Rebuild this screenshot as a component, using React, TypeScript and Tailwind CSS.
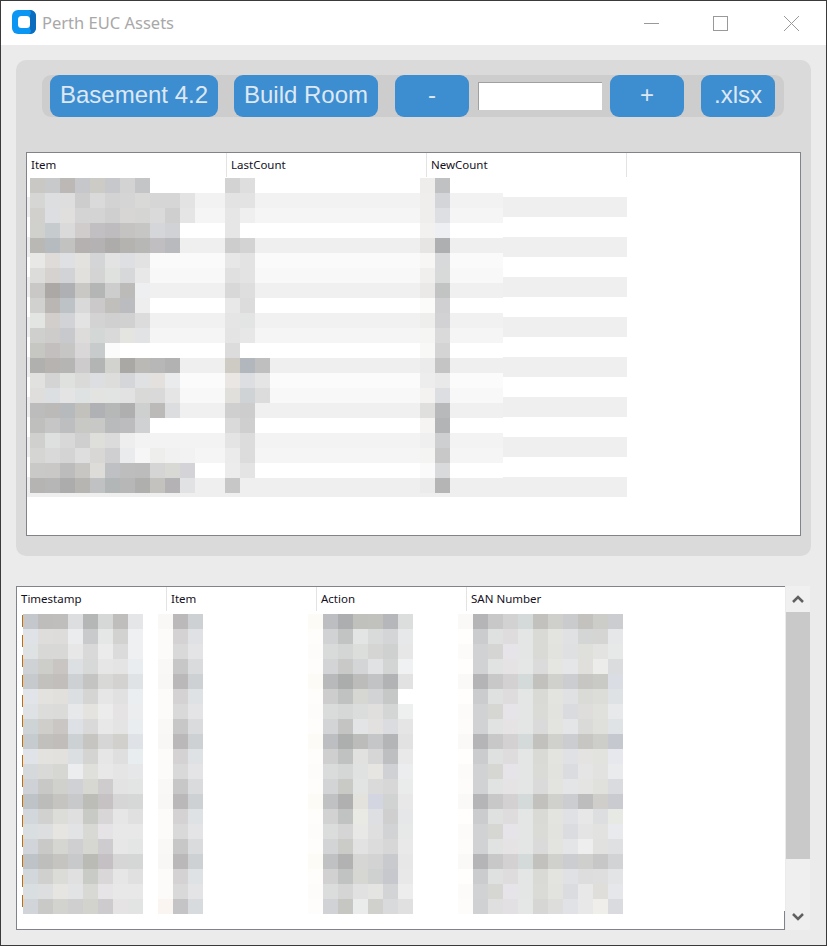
import React from "react";

// rows of the blurred top table: [row background, item cells, lastCount cells, newCount cells]
const assetRows: [string, string, string, string][] = [
  ["#ffffff", "c9c8c5 c7c9cb bcb8b5 c5c7ca cdcbc5 c6c8cb d4d3d4 c4c5c7", "d3d3d3 dedede", "eeedec c0c1c3"],
  ["#f2f2f2", "d6d6d5 dcdee0 dedede cdcdcd dadada d3d3d3 d5d5d5 d9d9d7 d6d6d6 d6d6d6 e3e3e3", "e3e3e3 e3e3e3", "efeeed d3d5d8"],
  ["#f5f5f5", "d1d0cd dcdee1 e0dfdd d4d4d4 d5d4d4 cfcfcf d7d6d5 d5d5d4 dadada cfcfcf e5e5e5", "e6e6e6 efefef", "efeeed dddfe2"],
  ["#ffffff", "d0d0cc c6cbce dadada d0cccb c1bfc2 bebcbe c4c3c1 c6c6c5 d5d6d9 d0d2d5", "e6e6e6", "f2f1f0 eeeff2"],
  ["#efefef", "b9b8b4 b6bbbf c2c2c0 b5b1b0 b4b2b3 aeacab b5b3b0 b7b7b5 c0bec1 b9babd", "cdcdcd d3d3d3", "e6e5e3 aeafb1"],
  ["#fafafa", "e8e9e7 dfdbd9 dee0e3 e4e2df d3d5d7 e2e3e2 dddfe2 e2e2e2", "e7e7e7 e3e3e3", "f7f6f4 d8d9db"],
  ["#f8f8f8", "dcdddb d5d2cf d1d3d6 e2e0dd d4d4d4 dfe1df d6d8da e8e8e9", "e0e0e0 e3e3e3", "f0efed d8dad9"],
  ["#f0f0f0", "c9c8c6 aca8a6 aeb0b4 c9c8c5 b4b6b5 cdcdcd bdbbb9 eeeff1", "d8d8d8 dedede", "eae9e7 c2c4c3"],
  ["#ffffff", "d1d1cf bab6b3 bcc2c6 d9d9da cbc9c9 c0bfbc babcbf eeeeee", "e8e8e8 dcdcdc", "fbfbf9 d0d0d2"],
  ["#f1f1f1", "e3e5e3 d1cecc d1d3d6 e3e3e3 d3d3d3 d0d0d0 d1d1d1 dcdcdc", "e4e5e4 e2e5e4", "eeeeed d2d2d4"],
  ["#f5f5f5", "cfcfcd cdccca c8c9cc dddcda d3d7d6 d9d9d9 e4e4e1 e2e3e5", "e4e4e4 e7e7e7", "f5f5f4 dadada"],
  ["#ffffff", "c6c6c3 c3bfbe c6c6c5 d9d7d8 c8cbcb fbfbfb", "dcdcdc", "f8f8f7 d4d4d5"],
  ["#efefef", "b0b1ae b7b3b0 b5b5b3 cdcbcb b2b5b3 d2d2ce a9a8a5 bab9b6 b7b7b7 b2b2b3", "cdcbc4 b2b7bd bfbfbf", "ebebeb c4c4c5"],
  ["#fbfbfb", "e1e2df d4d4d4 dfe1df dadad8 dcdee1 dddddb d4d6d9 e0e1e2 e3e0de eaebec", "e9e6e3 dcdee2 e5e5e5", "ededed e9e9e9"],
  ["#f8f8f8", "dfdedc dcdfe1 e3e4e3 dfe2e3 e3e3e1 e2e4e3 e1e2e1 d9d9d7 d9d9d9 e5e5e5", "e0dfdc d0d3d6 dcdcdc", "f3f2f0 dcdee1"],
  ["#f0f0f0", "bcbcbc bbbab9 b7babc c2c1bc afb1b4 b6b7b7 aeafae cecfcf bbbab8 dcdddf", "cfcfcf cdcdcd", "dfdfdd b7b9bb"],
  ["#ffffff", "bfbfbd c5c6c5 bdbec0 c8c8c5 c8c9c6 b9babc bcbcbf d0d1d3", "dadada cfcfcf", "f5f4f2 b2b4b6"],
  ["#f3f3f3", "d0d0ce dde0df d8d8d8 cfcfcf dededb dbdbdc eeeeef", "e4e4e4 dcdcdc", "efefef cdcfd1"],
  ["#f5f5f5", "d5d5d4 d9d9d9 d4d4d4 dedede d8d7d6 cfcfd2 e9ebed f6f6f6 eeeeec f1f1f1 f2f2f2", "ebebeb dcdcdc", "f4f4f2 c8c8c8"],
  ["#ffffff", "c9c9c7 c9c8c7 bcbcbc c7c6c3 dddcd9 bfc0c4 bdbdbd bcbcbc d5d5d5 d8d8d5 d4d4d8", "ececec e4e4e4", "fafafa d9dadc"],
  ["#efefef", "b5b4b2 b6b6b6 adacac b6b5b2 bfc1c3 b2b6b7 b7b7b7 afafae c3c2be b4b2b4 e1e2e4", "c7c7c7", "ebebeb b5b5b6"],
];

// rows of the blurred log table: [timestamp, item, action, SAN number]
const logRows: [string, string, string, string][] = [
  ["c4c8cc bfbdbb c0bebc dcdee0 b5b6b6 d5d8d6 bfbebc e5e6e8", "faf8f6 bbb9b9 ced1d4", "fdfbf6 bdbec1 adaeaf c0c0bd c1c1be b6b7ba dcdedd", "fbf9f7 b5b5b7 c8c8c8 d3d2d2 d4d9da c2c1be cfcfcc c9cbcc c3c2bf ccccc9 cbcdd0"],
  ["dfe2e6 dedddb dddcda ebecee c8cacb e5e7e6 d2d2d1 eff0f2", "fdfbf9 d4d2d2 dfe1e4", "fefdfb d1d2d3 c1c4c3 e3e5e4 d9dbda d4d5d6 e7e8ea", "fffefc cbcccd dfe1e0 dfdcdd e4e6e5 d9d9d6 e3e3e0 dfe1e3 d4d5d5 d5d6d4 e5e7e9"],
  ["dfe2e3 d8d8d6 d8d8d6 e7e7e7 d9d9d9 ebebeb dcdbdb eef0f2", "fcfbfa d9d9d9 e4e4e6", "fdfcfa d9dbdb d4d5d5 dcdedc d5d6d3 ced1d0 e7e7e8", "fcfbfa d1d2d4 d5d6d4 e6e4e8 e4e6e5 d9d9d6 e2e2df dee0e2 dfdfdc e3e3e2 e7e9e8"],
  ["ced2d5 cdcdc9 c8c5c3 dde0e2 d7d8d8 e6e6e6 e5e4e4 e9edf0", "faf8f6 c7c7c7 dadbdd", "fefdfb d2d4d6 c9c9c7 d4d5d6 e1e2e4 d3d4d4 f0f1f3", "fffefc d1d2d4 e1e3e2 e5e3e4 e5e7e6 dadbda e5e5e2 e4e6e8 e1dfdc ecedea dbdcde"],
  ["c6cacd c3c1be c1bebc cdd1d4 c4c4c2 d8d8d7 d3d2d0 e0e3e6", "f9f7f5 bab8b8 ced1d4", "fdfbf6 b8b9bb abacac bcbdba c2c3c5 b2b3b5 e2e2e2", "fbf9f7 b4b4b6 c8c8c8 d3d1d1 d4d9da c2c1be d0d0cc cbcdd0 c8c6c3 c9c9c6 dadde3"],
  ["e1e4e9 e3e2df e1e0dd dcdfe1 d5d6d3 e6e6e6 e2e1e1 eaeef1", "fdfbf9 d4d2d2 dfe2e5", "fefdfb cdcdcd bfc2c1 d6d6d3 d2d3d5 c6c7c7 ffffff", "fffefc cbcccd dfe1e0 dfdcdd e4e6e5 d9d9d6 e3e3e0 dfe1e3 dadad7 dcdcd9 dee2e5"],
  ["dfe2e4 dcdcda dbdbd9 e7e8ea e4e3df ececec e5e3e3 ebedef", "fcfbfa d9d9d9 e4e4e6", "fdfcfa dadcdc d6d7d7 dbdddc e0dfdd d3d6d5 eef0f0", "fcfbfa d1d2d4 d6d6d3 e6e4e8 e4e6e5 dadad7 e2e2df d9dbde dedddb e0e0dd e7e9eb"],
  ["ced3d6 cfcecb c9c6c3 dde0e4 d8d9d8 e8e8e8 e5e4e4 e9edf0", "faf8f6 c7c7c7 dadbdd", "fefdfb d2d4d6 c4c4c2 e3e4e5 e2e1df dadcdf e5e5e5", "fdfcfa d1d2d4 e1e3e2 e5e3e4 e4e6e6 dadada e3e3e0 e3e5e7 dadad8 dfdfdc dfe3e6"],
  ["c6cbcf c2c0bd c0bdba ccd1d4 c6c5c2 d6d6d6 d1d0cd dfe3e7", "f9f7f5 bab8b8 ced1d4", "fdfbf6 bdbec1 adaeae bcbdba c5c6c8 b4b5b7 e2e2e2", "fbf9f7 b5b5b7 c8c8c8 d3d1d1 d4d9da c2c1be d0d0cc cbcdd0 c8c6c3 cdcdc9 c5c8ce"],
  ["e0e4e9 e3e2df e2e1de dcdfe1 d4d5d2 e6e6e6 e0dfdf e8edf0", "fdfbf9 d4d2d2 dfe2e5", "fefdfb cfcfcf bfc2c1 e1e2df d6d6d6 bdbfc1 e9e9ea", "fffefc cbcccd dfe1e0 dfdcdd e4e6e5 d9d9d6 e3e3e0 dfe1e5 e4e3e1 e2e2df e7e8ed"],
  ["d6d9db d9d9d7 d6d6d3 ebedef dfdfdc e8e8e8 e5e5e5 e5e7e9", "fcfbfa d9d9d9 e4e4e6", "fdfcfa dadcdb d5d6d6 e0e2e1 e6e5e2 cfd1d4 ecedef", "fcfbfa d1d2d4 d6d6d3 e6e4e8 e4e6e5 dadad7 e2e2df dadcdf e5e5e5 e2e2e0 e9ebed"],
  ["ced1d5 c8c8c6 d0d0cc d0d1d4 d7d8d2 cfcccd e3e3e3 e2e5e3", "faf8f6 c7c7c7 dadbdd", "fefdfb d3d4d6 c9c9c6 e2e3e3 dadadb d7d7d8 eaeceb", "fdfcfa d1d2d4 e1e3e2 e5e3e4 e4e6e6 dadada e3e3e0 e3e5e7 e4e5e3 e0e0dc dadbdf"],
  ["bdc3c7 bcbcba c5c4c0 c8c9cb bbbdb6 c6c2c4 d5d6d5 d5d8d7", "f9f7f5 bab8b8 ced1d4", "fdfbf6 c0c1c3 b0b0b0 e3e2dd d3d6e0 d1d2d2 e8e8e8", "fbf9f7 b5b5b7 c8c8c8 d3d1d1 d4d9da c2c1be d0d0cc cbcdd0 bdbdbd cfcecb c9cbd0"],
  ["d1d7da d1d1cf dcdcd8 dfdfdf c8cac5 d9d6d8 e6e6e6 dfe0df", "fdfbf9 d4d2d2 dfe2e5", "fefdfb d2d2d2 c0c3c1 eaeae5 dedfe3 cfcfd0 e6e7e8", "fffefc cbcccd dfe1e0 dfdcdd e4e6e5 d9d9d6 e3e3e0 dfe1e5 e7e7e7 dcdee0 e7e9e5"],
  ["d9dfe1 dcdee0 e6e5e2 e2e3e5 d8d9d4 e5e3e6 e8e8e8 e8e8e8", "fcfbfa d9d9d9 e4e4e6", "fdfcfa dbdddc d5d5d5 e8e9e6 dfdfdf d1d3d5 e7e8e8", "fcfbfa d1d2d4 d6d6d3 e6e4e8 e4e6e5 dadad7 e2e2df dadcdf e4e4e4 e2e2e0 e8eaed"],
  ["d1d5d9 c9c9c7 d5d5d1 cfcfd1 d6d7d1 cfcccf e7e7e7 e3e6e4", "faf8f6 c7c7c7 dadbdd", "fefdfb d3d4d6 cbcbc8 e2e2e2 dcdcdd d7d7d8 e8e9e8", "fdfcfa d1d2d4 e1e3e2 e5e3e4 e4e6e6 dadada e3e3e0 e3e5e7 eeeeee e1e1df dee0e2"],
  ["bdc3c7 bebebc c5c4c0 c8c9cb b9bbb4 c5c0c3 d5d6d5 d4d7d6", "f9f7f5 bab8b8 ced1d4", "fdfbf6 c0c1c3 b2b2b2 d6d6d4 d3d3d3 c9cacd e7e7e7", "fbf9f7 b5b5b7 c8c8c8 d3d1d1 d4d9da c2c1be d0d0cc cbcdd0 cfcfcd c7c7c7 d1d3d5"],
  ["d1d7da d0d0ce dbdbd7 e0e0e0 c9cbc6 dad7d9 e6e6e6 dfe0df", "fdfbf9 d4d2d2 dfe2e5", "fefdfb d1d1d1 c0c3c1 d6d6d3 cfd0d0 c6c8cd e8e8e9", "fffefc cbcccd dfe1e0 dfdcdd e4e6e5 d9d9d6 e3e3e0 dfe1e5 dddddd dedede e2e4e6"],
  ["d9dfe1 dcdee0 e6e5e2 e2e3e5 d8d9d4 e6e4e7 e8e8e8 e8e8e8", "fcfbfa d9d9d9 e4e4e6", "fdfcfa dbdddc d5d5d5 e1e1e1 e4e4e2 d3d4d6 ecedec", "fcfbfa d1d2d4 d6d6d3 e6e4e8 e4e6e5 dadad7 e2e2df dadcdf e8e8e8 dfdeda e5e7ea"],
  ["d1d4d8 c9c9c7 d2d2ce cfcfcf d2d3cc cecbce e5e3e3 e1e4e2", "fbf5f1 c4c4c7 d7dbde", "fefdfb d0d2d6 c6c6c3 e9ecea d0d0cd d9dadc e0e0e0", "fdfcfa d0d1d3 dfdfdf e2e0e2 e5e7e6 d6d6d4 dddddb e0e2e5 e8e8e8 efeeeb d9dbdf"],
];

const Cells = ({ colors }: { colors: string }) => (
  <>
    {colors.split(" ").map((c, i) => (
      <div key={i} className="w-[15px] h-[15px] shrink-0" style={{ backgroundColor: `#${c}` }} />
    ))}
  </>
);

const Zebra = ({ className }: { className: string }) => (
  <div className={`${className} shrink-0`}>
    {Array.from({ length: 16 }).map((_, i) => (
      <div key={i} className={`h-5 ${i % 2 === 1 ? "bg-[#efefef]" : "bg-white"}`} />
    ))}
  </div>
);

const ToolButton = ({ label, className }: { label: string; className: string }) => (
  <button className={`${className} h-[42px] pb-0.5 shrink-0 rounded-[9px] bg-[#3d8dd1] text-[24px] leading-none text-[#dde8f3] flex items-center justify-center`}>
    {label}
  </button>
);

const HeaderCell = ({ label, noDivider }: { label: string; noDivider?: boolean }) => (
  <div
    className={`${noDivider ? "" : "border-r border-[#e3e3e3]"} w-full h-6 pl-1 text-[11.5px] leading-[24px] text-[#14101c]`}
  >
    {label}
  </div>
);

const App: React.FC = () => {
  return (
    <div className="w-[827px] h-[946px] border border-[#3a3a3a] bg-[#ebebeb] flex flex-col overflow-hidden font-['Noto_Sans',sans-serif]">
      {/* title bar */}
      <div className="h-11 bg-white flex items-center shrink-0">
        <svg className="ml-[11px] -mt-[2px]" width="24" height="24" viewBox="0 0 24 24">
          <rect width="24" height="24" rx="6" fill="#0a96f2" />
          <path d="M18 0 h0 a6 6 0 0 1 6 6 v12 a6 6 0 0 1 -6 6 h-1 a3 3 0 0 0 1 -5 v-14 a3 3 0 0 0 -1 -5 z" fill="#0c6cbd" />
          <rect x="6" y="6" width="12" height="12" rx="3.5" fill="#ffffff" />
        </svg>
        <span className="ml-[6px] text-[16.5px] leading-none text-[#a8a8a8]">Perth EUC Assets</span>
        <div className="ml-auto flex items-center mt-px">
          <div className="w-[15px] h-px bg-[#999999]" />
          <div className="ml-[54px] w-[15px] h-[15px] border border-[#999999]" />
          <svg className="ml-[56px] mr-[27px]" width="15" height="15" viewBox="0 0 15 15">
            <path d="M0 0 L15 15 M15 0 L0 15" stroke="#999999" strokeWidth="1" fill="none" />
          </svg>
        </div>
      </div>

      <div className="flex-1 pl-[15px] pt-[15px] flex flex-col">
        {/* counting panel */}
        <div className="w-[795px] h-[496px] rounded-[10px] bg-[#dadada] pt-[15px] pl-[10px] shrink-0">
          <div className="ml-4 w-[742px] h-[42px] rounded-[9px] bg-[#cdcdcd] pl-2 flex items-center font-['Liberation_Sans',sans-serif]">
            <ToolButton label="Basement 4.2" className="w-[168px]" />
            <ToolButton label="Build Room" className="ml-4 w-[144px]" />
            <ToolButton label="-" className="ml-[17px] w-[74px]" />
            <input
              readOnly
              className="ml-[9px] w-[124px] h-7 shrink-0 bg-white border-t border-l border-[#a0a0a0] outline-none"
            />
            <ToolButton label="+" className="ml-2 w-[74px]" />
            <ToolButton label=".xlsx" className="ml-[17px] w-[74px]" />
          </div>

          <div className="mt-[35px] w-[775px] h-[384px] border border-[#82828a] bg-white">
            <div className="grid grid-cols-[200px_200px_200px]">
              <HeaderCell label="Item" />
              <HeaderCell label="LastCount" />
              <HeaderCell label="NewCount" />
            </div>
            <div className="flex">
              <Zebra className="w-[3px]" />
              <div className="w-[473px] pt-px shrink-0">
                {assetRows.map(([bg, item, last, count], i) => (
                  <div key={i} className="flex h-[15px]" style={{ backgroundColor: bg }}>
                    <div className="flex w-[195px] shrink-0"><Cells colors={item} /></div>
                    <div className="flex w-[195px] shrink-0"><Cells colors={last} /></div>
                    <div className="flex w-[83px] shrink-0"><Cells colors={count} /></div>
                  </div>
                ))}
                <div className="h-1 bg-[#efefef]" />
              </div>
              <Zebra className="w-[124px]" />
            </div>
          </div>
        </div>

        {/* log table and its scrollbar */}
        <div className="mt-[30px] h-[344px] flex shrink-0">
          <div className="w-[769px] h-[344px] border-l border-t border-b border-[#82828a] bg-white flex shrink-0">
            <div className="flex-1">
              <div className="grid grid-cols-[150px_150px_150px_150px]">
                <HeaderCell label="Timestamp" />
                <HeaderCell label="Item" />
                <HeaderCell label="Action" />
                <HeaderCell label="SAN Number" noDivider />
              </div>
              <div className="flex pt-[3px] pl-[5px]">
                <div className="w-px pt-px flex flex-col gap-2 shrink-0">
                  {Array.from({ length: 15 }).map((_, i) => (
                    <div key={i} className="h-3 w-px bg-[#c06f08]" />
                  ))}
                </div>
                <div>
                  {logRows.map(([stamp, item, action, san], i) => (
                    <div key={i} className="flex h-[15px]">
                      <div className="flex w-[135px] shrink-0"><Cells colors={stamp} /></div>
                      <div className="flex w-[150px] shrink-0"><Cells colors={item} /></div>
                      <div className="flex w-[150px] shrink-0"><Cells colors={action} /></div>
                      <div className="flex shrink-0"><Cells colors={san} /></div>
                    </div>
                  ))}
                </div>
              </div>
            </div>
            <div className="w-px h-[18px] self-end bg-[#82828a]" />
          </div>
          <div className="ml-px w-6 h-[344px] bg-[#efefef] flex flex-col shrink-0">
            <div className="h-[26px] bg-[#f0f0f0] flex items-center justify-center">
              <svg width="12" height="8" viewBox="0 0 12 8">
                <path d="M1 7 L6 2 L11 7" stroke="#606060" strokeWidth="2.5" fill="none" />
              </svg>
            </div>
            <div className="h-[247px] bg-[#c9c9c9]" />
            <div className="mt-auto h-[26px] flex items-center justify-center">
              <svg width="12" height="8" viewBox="0 0 12 8">
                <path d="M1 1 L6 6 L11 1" stroke="#606060" strokeWidth="2.5" fill="none" />
              </svg>
            </div>
          </div>
        </div>
      </div>
    </div>
  );
};

export default App;
